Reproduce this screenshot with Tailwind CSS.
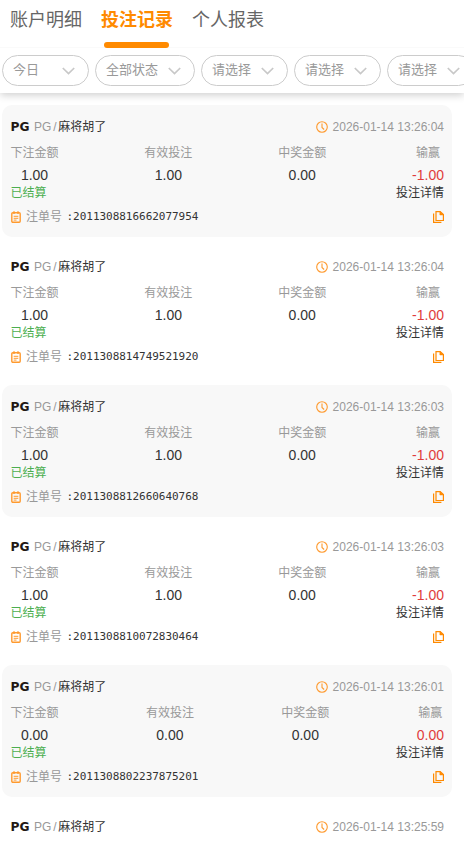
<!DOCTYPE html>
<html lang="zh-CN">
<head>
    <meta charset="UTF-8">
    <meta name="viewport" content="width=device-width, initial-scale=1.0">
    <title>投注记录</title>
    <script src="https://cdn.jsdelivr.net/npm/@tailwindcss/browser@4"></script>
</head>
<body class="h-[841px] overflow-hidden bg-white font-['Liberation_Sans','Noto_Sans_CJK_SC',sans-serif] text-xs text-[#333]">
    <!-- Header -->
    <header class="relative h-[93px] bg-white shadow-[0_2px_8px_rgba(0,0,0,0.2)]">
        <!-- Tabs -->
        <nav class="flex h-12 gap-[19px] border-b border-[#fafafa] pl-[10px] text-lg leading-[40px] text-[#666]">
            <a class="h-12">账户明细</a>
            <a class="flex h-12 flex-col items-center font-bold text-[#ff8a00]">
                <span class="h-[42px]">投注记录</span>
                <span class="mr-[1px] h-[6px] w-[65px] shrink-0 rounded-[3px] bg-[#ff8a00]"></span>
            </a>
            <a class="h-12">个人报表</a>
        </nav>
        <!-- Filters -->
        <div id="filters" class="flex gap-[6px] overflow-hidden pt-[7px] pl-[2px]"></div>
    </header>

    <!-- Records -->
    <main id="records" class="flex w-[452px] flex-col gap-2 pt-3 pl-[2px]"></main>

    <script>
        const filters = [
            { label: "今日", width: 87 },
            { label: "全部状态", width: 100 },
            { label: "请选择", width: 87 },
            { label: "请选择", width: 87 },
            { label: "请选择", width: 87 },
        ];

        const records = [
            { time: "2026-01-14 13:26:04", bet: "1.00", win: "0.00", profit: "-1.00", id: "2011308816662077954" },
            { time: "2026-01-14 13:26:04", bet: "1.00", win: "0.00", profit: "-1.00", id: "2011308814749521920" },
            { time: "2026-01-14 13:26:03", bet: "1.00", win: "0.00", profit: "-1.00", id: "2011308812660640768" },
            { time: "2026-01-14 13:26:03", bet: "1.00", win: "0.00", profit: "-1.00", id: "2011308810072830464" },
            { time: "2026-01-14 13:26:01", bet: "0.00", win: "0.00", profit: "0.00", id: "2011308802237875201" },
            { time: "2026-01-14 13:25:59" },
        ];

        document.getElementById("filters").innerHTML = filters.map((f) => `
            <button class="flex h-[31px] shrink-0 items-center justify-between rounded-full border border-[#ccc] pr-[13px] pb-[2px] pl-[10px] text-[13px] leading-[18px] text-[#999]" style="width:${f.width}px">
                <span>${f.label}</span>
                <svg class="mt-[3px] h-[8px] w-[13px]" viewBox="0 0 13 8" fill="none" stroke="#c8c8c8" stroke-width="1.7"><path d="M.8 1l5.7 5.6L12.2 1"/></svg>
            </button>`).join("");

        // One amount column: label on top, value centred below
        const column = (label, value, color) => `
            <div class="text-center">
                <div class="h-[22px] leading-[22px] text-[#999]">${label}</div>
                <div class="h-[22px] text-sm leading-[22px] ${color}">${value}</div>
            </div>`;

        // Amounts, status and order number
        const details = (r) => `
                <div class="mt-[5px] flex justify-between">
                    ${column("下注金额", r.bet, "text-[#333]")}
                    ${column("有效投注", r.bet, "text-[#333]")}
                    ${column("中奖金额", r.win, "text-[#333]")}
                    ${column("输赢", r.profit, "text-[#e03c3c]")}
                </div>
                <div class="flex h-[14px] justify-between leading-[15px]">
                    <span class="text-[#4caf50]">已结算</span>
                    <span>投注详情</span>
                </div>
                <div class="mt-[7px] flex h-5 items-center justify-between">
                    <div class="flex items-center leading-5">
                        <svg class="mr-[5.5px] h-3 w-[10px]" viewBox="0 0 10 12" fill="none" stroke="#ff9a2e"><rect x=".8" y="1.8" width="8.4" height="9.4" rx="1" stroke-width="1.4"/><path d="M3 .3v2.6M7 .3v2.6" stroke-width="1.4"/><path d="M2.7 5.3h4.6M2.7 7.3h4.6M2.7 9.1h2.8" stroke-width="1"/></svg>
                        <span class="text-[#999]">注单号</span>
                        <span class="ml-[4.5px] font-['DejaVu_Sans_Mono',monospace] text-[11px] tracking-[-0.03px]">:${r.id}</span>
                    </div>
                    <svg class="h-3 w-[11px]" viewBox="0 0 11 12" fill="none" stroke="#ff8a00" stroke-width="1.2"><path d="M3 .6h4.2l3.2 3v5.9H3z"/><path d="M6.9.6v3.3h3.5z" fill="#ff8a00" stroke-width=".6"/><path d="M.6 2.6v8.8h7.8"/></svg>
                </div>`;

        document.getElementById("records").innerHTML = records.map((r) => `
            <section class="${r.id ? "h-[132px]" : "h-9"} shrink-0 rounded-[10px] pt-3 pr-2 pl-[8.5px] odd:bg-[#f8f8f8]">
                <div class="flex h-5 items-center justify-between">
                    <div class="flex items-center leading-5">
                        <svg class="mr-[5px] h-[14px] w-[18.5px] overflow-visible" viewBox="0 0 18.5 14"><text x="-0.5" y="11.4" textLength="19" lengthAdjust="spacingAndGlyphs" font-family="DejaVu Sans" font-weight="700" font-size="11.5" fill="#221815">PG</text></svg>
                        <span class="text-[#999]">PG</span><span class="mx-[1.8px] text-[#999]">/</span><span>麻将胡了</span>
                    </div>
                    <div class="flex items-center leading-5 text-[#999]">
                        <svg class="mr-[5px] h-3 w-3" viewBox="0 0 12 12" fill="none" stroke="#ff9a2e" stroke-width="1.1"><circle cx="6" cy="6" r="5.3"/><path d="M6 2.5v4l2.1 2"/></svg>
                        <span>${r.time}</span>
                    </div>
                </div>
                ${r.id ? details(r) : ""}
            </section>`).join("");
    </script>
</body>
</html>
